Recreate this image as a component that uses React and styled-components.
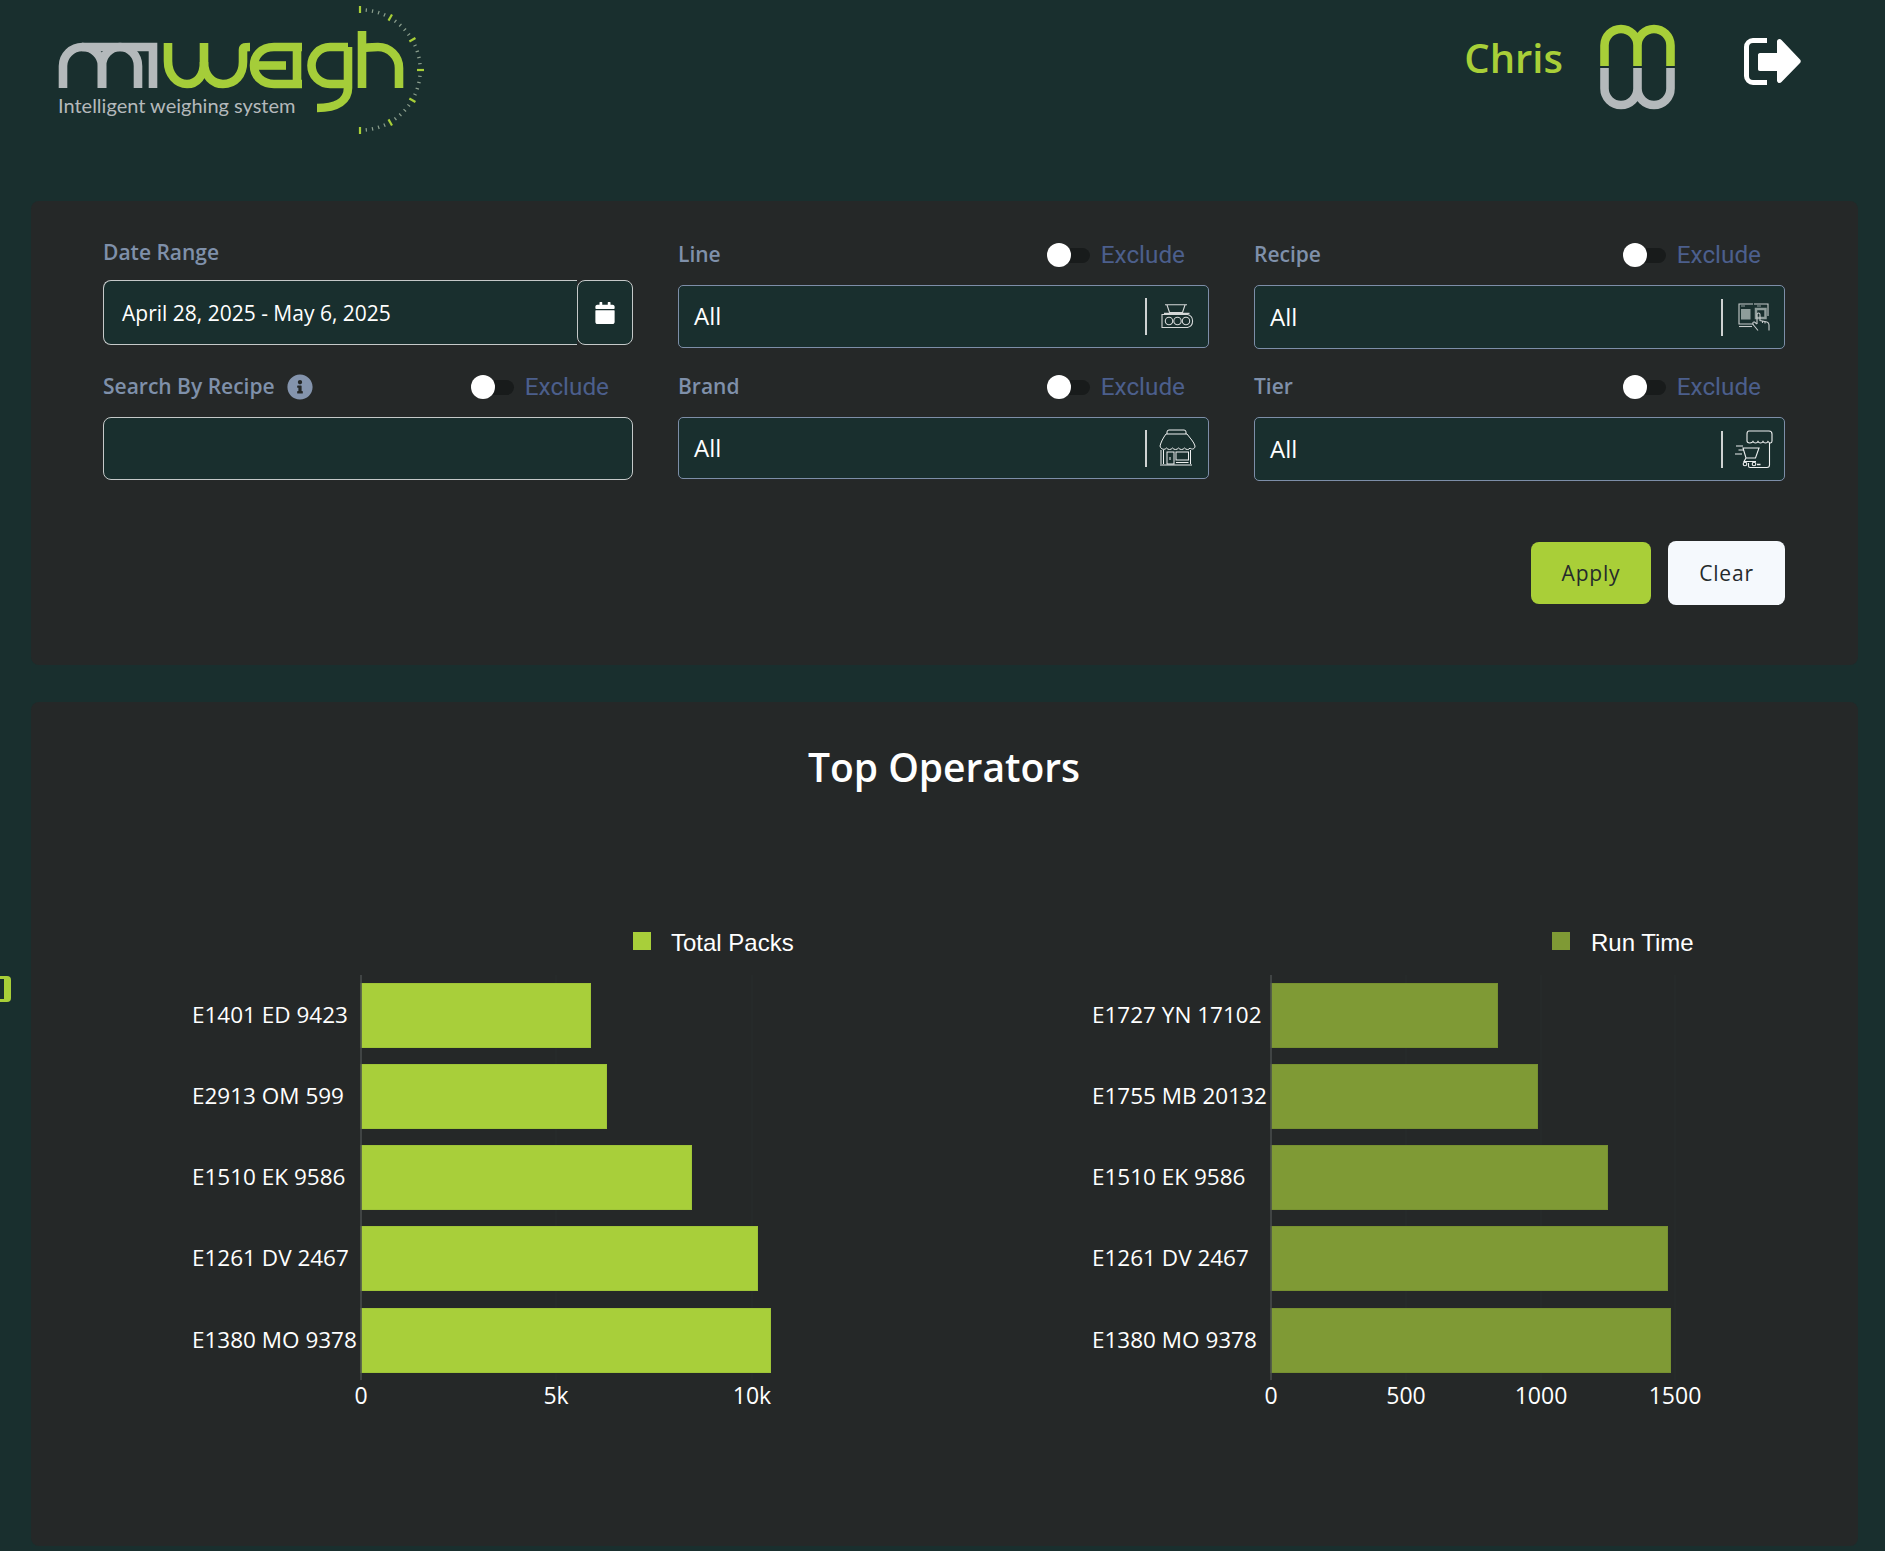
import React from 'react';
import styled, { createGlobalStyle } from 'styled-components';
import { FaCalendar, FaInfoCircle } from 'react-icons/fa';

const GlobalStyle = createGlobalStyle`
  html, body {
    margin: 0;
    padding: 0;
    background: #192f2e;
  }
  body {
    font-family: 'Open Sans', 'Liberation Sans', sans-serif;
  }
`;

const Page = styled.div`
  position: relative;
  min-height: 1551px;
  background: #192f2e;
`;

const Header = styled.header`
  display: flex;
  justify-content: space-between;
  align-items: flex-start;
  height: 201px;
  padding: 4px 79px 0 56px;
  box-sizing: border-box;
`;

const UserArea = styled.div`
  display: flex;
  align-items: flex-start;
  padding-top: 17px;
`;

const UserName = styled.div`
  font-size: 40px;
  font-weight: 600;
  line-height: 74px;
  color: #a8cf38;
  margin-right: 33px;
`;

const Monogram = styled.svg`
  display: block;
  width: 84px;
  height: 92px;
  margin-right: 60px;
`;

const LogoutIcon = styled.svg`
  display: block;
  width: 66px;
  height: 54px;
  margin-top: 13px;
`;

const LogoSvg = styled.svg`
  display: block;
  width: 370px;
  height: 130px;
`;

const Tagline = styled.text`
  font-family: Lato, 'Open Sans', sans-serif;
  font-size: 20px;
  fill: #b4b9bb;
`;

const Main = styled.main`
  display: flex;
  flex-direction: column;
  gap: 37px;
  padding: 0 27px 0 31px;
`;

const Card = styled.section`
  background: #252828;
  border-radius: 8px;
`;

const FilterCard = styled(Card)`
  padding: 36px 73px 60px 72px;
`;

const FilterGrid = styled.div`
  display: grid;
  grid-template-columns: 530px 531px 531px;
  column-gap: 45px;
  row-gap: 20px;
  align-items: start;
`;

const Field = styled.div`
  display: flex;
  flex-direction: column;
  height: 112px;
  padding-top: ${(p) => (p.$date ? '0' : '6px')};
  box-sizing: border-box;
`;

const LabelRow = styled.div`
  display: flex;
  align-items: center;
  justify-content: space-between;
  height: ${(p) => (p.$date ? '32px' : '24px')};
  margin-bottom: ${(p) => (p.$date ? '11px' : '18px')};
  padding-right: 24px;
`;

const LabelGroup = styled.div`
  display: flex;
  align-items: center;
  gap: 12px;
`;

const Label = styled.label`
  padding-bottom: 2px;
  font-size: 21px;
  font-weight: 600;
  color: #7f90aa;
  white-space: nowrap;
`;

const InfoIcon = styled(FaInfoCircle)`
  width: 26px;
  height: 26px;
  color: #8494ad;
`;

const ExcludeWrap = styled.div`
  display: flex;
  align-items: center;
  gap: 11px;
`;

const ToggleTrack = styled.div`
  position: relative;
  width: 43px;
  height: 15px;
  border-radius: 8px;
  background: #181b1b;
`;

const ToggleThumb = styled.div`
  position: absolute;
  left: 0;
  top: -4.500px;
  width: 24px;
  height: 24px;
  border-radius: 50%;
  background: #ffffff;
`;

const ExcludeText = styled.span`
  font-family: Roboto, sans-serif;
  font-size: 24.300px;
  line-height: 28px;
  color: #4c5f8c;
`;

const DateGroup = styled.div`
  display: flex;
  height: 65px;
`;

const DateInput = styled.div`
  flex: 1;
  display: flex;
  align-items: center;
  padding-left: 18px;
  font-size: 21px;
  color: #ffffff;
  background: #192f2e;
  border: 1.500px solid #c5c9c9;
  border-right: none;
  border-radius: 8px 0 0 8px;
`;

const CalendarButton = styled.div`
  display: flex;
  align-items: center;
  justify-content: center;
  width: 56px;
  box-sizing: border-box;
  color: #ffffff;
  background: #192f2e;
  border: 1.500px solid #c5c9c9;
  border-radius: 8px;
  font-size: 22px;
`;

const SearchInput = styled.div`
  height: 63px;
  box-sizing: border-box;
  background: #192f2e;
  border: 1.500px solid #c5c9c9;
  border-radius: 8px;
`;

const Select = styled.div`
  display: flex;
  align-items: center;
  height: ${(p) => p.$height}px;
  box-sizing: border-box;
  background: #192f2e;
  border: 1.500px solid #7d8ea8;
  border-radius: 5px;
`;

const SelectValue = styled.span`
  flex: 1;
  padding: 0 0 2px 15px;
  font-size: 24px;
  color: #ffffff;
`;

const Divider = styled.span`
  width: 2px;
  height: 37px;
  background: #cfd2d2;
`;

const IconSlot = styled.span`
  display: flex;
  align-items: center;
  justify-content: center;
  width: 61px;
`;

const Actions = styled.div`
  display: flex;
  justify-content: flex-end;
  align-items: center;
  gap: 17px;
  margin-top: 60px;
`;

const Button = styled.button`
  width: ${(p) => (p.$primary ? '120px' : '117px')};
  height: ${(p) => (p.$primary ? '62px' : '64px')};
  border: none;
  border-radius: 8px;
  font-family: 'Open Sans', sans-serif;
  font-size: 21px;
  font-weight: 500;
  letter-spacing: 0.800px;
  color: #252a2c;
  background: ${(p) => (p.$primary ? '#a9cf38' : '#f5f9fd')};
`;

const ChartCard = styled(Card)`
  padding: 38px 73px 103px 72px;
`;

const Title = styled.h2`
  margin: 0 0 126px;
  font-size: 39px;
  font-weight: 600;
  line-height: 54px;
  text-align: center;
  color: #ffffff;
`;

const ChartRow = styled.div`
  display: grid;
  grid-template-columns: 841px 841px;
`;

const ChartSvg = styled.svg`
  display: block;
  width: 100%;
  height: 523px;
`;

const LegendText = styled.text`
  font-family: 'Liberation Sans', Arial, sans-serif;
  font-size: 24px;
  fill: #ffffff;
`;

const AxisLabel = styled.text`
  font-family: 'Open Sans', sans-serif;
  font-size: ${(p) => (p.$tick ? '23px' : '22.500px')};
  fill: #ffffff;
`;

const SideTab = styled.div`
  position: absolute;
  left: 0;
  top: 976px;
  width: 11px;
  height: 26px;
  box-sizing: border-box;
  border: solid #a8cf38;
  border-width: 3px 7px 3px 0;
  border-radius: 0 4px 4px 0;
`;

const packs = {
  color: '#a8cf3a',
  edge: '#9fc538',
  legend: 'Total Packs',
  legendX: 530,
  legendTextX: 568,
  labelX: 89,
  axisX: 258,
  rows: [
    ['E1401 ED 9423', 230],
    ['E2913 OM 599', 246],
    ['E1510 EK 9586', 331],
    ['E1261 DV 2467', 397],
    ['E1380 MO 9378', 410],
  ],
  ticks: [
    ['0', 258],
    ['5k', 453],
    ['10k', 649],
  ],
};

const runTime = {
  color: '#7f9a35',
  edge: '#779131',
  legend: 'Run Time',
  legendX: 608,
  legendTextX: 647,
  labelX: 148,
  axisX: 327,
  rows: [
    ['E1727 YN 17102', 227],
    ['E1755 MB 20132', 267],
    ['E1510 EK 9586', 337],
    ['E1261 DV 2467', 397],
    ['E1380 MO 9378', 400],
  ],
  ticks: [
    ['0', 327],
    ['500', 462],
    ['1000', 597],
    ['1500', 731],
  ],
};

const BAR_TOPS = [63, 144, 225, 306, 388];

function BarChart({ data }) {
  return (
    <ChartSvg>
      <rect x={data.legendX} y={12} width={18} height={18} fill={data.color} />
      <LegendText x={data.legendTextX} y={31}>
        {data.legend}
      </LegendText>
      {data.ticks.slice(1).map(([t, x]) => (
        <line key={t} x1={x} x2={x} y1={55} y2={460} stroke='#292d2d' strokeWidth='1' />
      ))}
      {data.rows.map(([name, w], i) => (
        <g key={name}>
          <rect
            x={data.axisX}
            y={BAR_TOPS[i] + 0.5}
            width={w - 0.5}
            height={64}
            fill={data.color}
            stroke={data.edge}
            strokeWidth='1'
          />
          <AxisLabel x={data.labelX} y={BAR_TOPS[i] + 40}>
            {name}
          </AxisLabel>
        </g>
      ))}
      <line x1={data.axisX} x2={data.axisX} y1={55} y2={460} stroke='#4a4e4e' strokeWidth='1.5' />
      {data.ticks.map(([t, x]) => (
        <AxisLabel key={t} $tick x={x} y={484} textAnchor='middle'>
          {t}
        </AxisLabel>
      ))}
    </ChartSvg>
  );
}

function DialTicks() {
  const out = [];
  for (let a = -90; a <= 90; a += 6) {
    const major = a % 30 === 0;
    const rad = (a * Math.PI) / 180;
    const r1 = major ? 57 : 58.5;
    const r2 = major ? 64 : 62;
    out.push(
      <line
        key={a}
        x1={360 + r1 * Math.cos(rad)}
        y1={70 + r1 * Math.sin(rad)}
        x2={360 + r2 * Math.cos(rad)}
        y2={70 + r2 * Math.sin(rad)}
        stroke={major ? '#a8cf38' : '#8c9f8e'}
        strokeWidth={major ? 2.2 : 1.2}
      />
    );
  }
  return out;
}

function Logo() {
  return (
    <LogoSvg viewBox='56 4 370 130' role='img' aria-label='miweigh'>
      <g fill='none' stroke='#b4b9bb' strokeWidth='8.600'>
        <path d='M63 88V66A19.500 19 0 0 1 82.500 47A19.500 19 0 0 1 102 66V88' />
        <path d='M102 88V66A18 19 0 0 1 120 47A18 19 0 0 1 138 66V88' />
        <path d='M82 47H120' />
        <path d='M153 88V47H120' />
      </g>
      <g fill='none' stroke='#a5cd39' strokeWidth='8.600'>
        <path d='M168 43V61C168 75 177 84 187 84C197 84 204 76 204 62V43' />
        <path d='M204 62C204 76 213 84 223 84C235 84 243 75 243 62V50C243 47 245 47 250 47' />
        <path d='M302 47H274C261 47 254 56 254 65.500C254 76 262 84 274 84H302' />
        <path d='M256 65.500H286' />
        <path d='M297 47V88' />
        <path d='M348 47H330A18.500 18.500 0 0 0 330 84H348' />
        <path d='M348 47V88C348 100 338 108 317 108' />
        <path d='M362 31V88' />
        <path d='M362 49C366 47 372 47 378 47A21 21 0 0 1 399 68V88' />
      </g>
      <DialTicks />
      <Tagline x='58' y='113'>
        Intelligent weighing system
      </Tagline>
    </LogoSvg>
  );
}

function ConveyorIcon() {
  return (
    <svg width='34' height='26' viewBox='0 0 34 26' fill='none' stroke='#d5d8d8' strokeWidth='1.100'>
      <path d='M4 .8H26M6 1L8.500 8.500H21.500L24 1' />
      <path d='M3 9.500H28.500' strokeWidth='1.500' />
      <path d='M1 10.500H26.500A6.700 6.700 0 0 1 26.500 23.500H1Z' />
      <circle cx='8' cy='17' r='3.700' />
      <circle cx='16.500' cy='17' r='3.700' />
      <circle cx='25' cy='17' r='3.700' />
    </svg>
  );
}

function ShopIcon() {
  return (
    <svg width='37' height='38' viewBox='0 0 37 38' fill='none' stroke='#eef0f0' strokeWidth='1'>
      <path d='M8 5V3A2 2 0 0 1 10 1H25A2 2 0 0 1 27 3V5' />
      <path d='M7 5H28C31 9 35 13 36 17C36 20 33 21 31 19C30 21 27 21 25.500 19C24 21 21 21 19.500 19C18 21 15 21 13.500 19C12 21 9 21 7.500 19C6 21 2 21 1 17C2 13 4 9 7 5Z' />
      <path d='M2 21V35M4.500 21V35M31.500 21V35M1 36H33' />
      <rect x='8' y='23' width='7' height='12' />
      <path d='M11 28V31' />
      <rect x='17' y='23' width='12.500' height='8' />
      <path d='M17 33.500H29.500' />
    </svg>
  );
}

function RecipeIcon() {
  return (
    <svg width='32' height='30' viewBox='0 0 32 30' fill='none' stroke='#c8cccc' strokeWidth='1.100'>
      <path d='M15 2H1V22H15' />
      <path d='M16 2H30V14' />
      <path d='M1 24.500H14' />
      <rect x='3' y='7' width='9.500' height='10.500' fill='#8f9d9b' stroke='none' />
      <rect x='18' y='7' width='9.500' height='9' fill='none' stroke='#8f9d9b' strokeWidth='2.500' />
      <path d='M3 4H7M19 4H23' stroke='#8f9d9b' />
      <path d='M19 22V12.500A1.500 1.500 0 0 1 22 12.500V18.500L29 20C30.500 20.500 31 21.500 31 23V28.500' />
      <path d='M19 22L16.500 20C14.500 19.500 14.500 22 15.500 23L20 28.500' />
      <path d='M24.500 19V21M27 19.500V21.500' />
    </svg>
  );
}

function TierIcon() {
  return (
    <svg width='38' height='39' viewBox='0 0 38 39' fill='none' stroke='#eef0f0' strokeWidth='1.100'>
      <path d='M14 1H34C36 1 37 2 37 4V11C37 13.500 34.500 13.500 33 11.500C32 13.500 29 13.500 28 11.500C27 13.500 24 13.500 23 11.500C22 13.500 19 13.500 18 11.500C17 13.500 12 13.500 12 11V4C12 2 13 1 14 1Z' />
      <path d='M34.500 13V35C34.500 36.500 33.500 37.500 32 37.500H15C14 37.500 13.500 37 13.500 36V33' />
      <path d='M22 34.500H25.500' strokeWidth='1.500' />
      <path d='M1 16H8M3.500 20H9M0 24H7' />
      <path d='M8 18H24L20.500 28H11L8 18ZM11 28L9 31.500H21' />
      <circle cx='10' cy='34' r='1.800' />
      <circle cx='19' cy='34' r='1.800' />
    </svg>
  );
}

function Exclude() {
  return (
    <ExcludeWrap>
      <ToggleTrack>
        <ToggleThumb />
      </ToggleTrack>
      <ExcludeText>Exclude</ExcludeText>
    </ExcludeWrap>
  );
}

function SelectField({ label, height, children }) {
  return (
    <Field>
      <LabelRow>
        <Label>{label}</Label>
        <Exclude />
      </LabelRow>
      <Select $height={height}>
        <SelectValue>All</SelectValue>
        <Divider />
        <IconSlot>{children}</IconSlot>
      </Select>
    </Field>
  );
}

export default function App() {
  return (
    <Page>
      <GlobalStyle />
      <Header>
        <Logo />
        <UserArea>
          <UserName>Chris</UserName>
          <Monogram viewBox='1596 21 84 92' fill='none' strokeWidth='8.600'>
            <path
              stroke='#a8cf38'
              d='M1604.500 66V45.500A16.500 16.500 0 0 1 1637.500 45.500V66M1637.500 45.500A16.500 16.500 0 0 1 1670.500 45.500V66'
            />
            <path
              stroke='#b4b9bb'
              d='M1604.500 68V88.500A16.500 16.500 0 0 0 1637.500 88.500V68M1637.500 88.500A16.500 16.500 0 0 0 1670.500 88.500V68'
            />
          </Monogram>
          <LogoutIcon viewBox='1740 34 66 54'>
            <path
              d='M1767 40.500H1753A6.500 6.500 0 0 0 1746.500 47V76A6.500 6.500 0 0 0 1753 82.500H1767'
              fill='none'
              stroke='#ffffff'
              strokeWidth='5'
            />
            <path
              d='M1760 53H1777V41.500C1777 39 1780 38 1781.500 40L1800 59.500C1801 60.500 1801 62 1800 63L1781.500 82C1780 84 1777 83 1777 80.500V71H1760C1758.500 71 1758 70 1758 69V55C1758 54 1758.500 53 1760 53Z'
              fill='#ffffff'
            />
          </LogoutIcon>
        </UserArea>
      </Header>
      <Main>
        <FilterCard>
          <FilterGrid>
            <Field $date>
              <LabelRow $date>
                <Label>Date Range</Label>
              </LabelRow>
              <DateGroup>
                <DateInput>April 28, 2025 - May 6, 2025</DateInput>
                <CalendarButton>
                  <FaCalendar />
                </CalendarButton>
              </DateGroup>
            </Field>
            <SelectField label='Line' height={63}>
              <ConveyorIcon />
            </SelectField>
            <SelectField label='Recipe' height={64}>
              <RecipeIcon />
            </SelectField>
            <Field>
              <LabelRow>
                <LabelGroup>
                  <Label>Search By Recipe</Label>
                  <InfoIcon />
                </LabelGroup>
                <Exclude />
              </LabelRow>
              <SearchInput />
            </Field>
            <SelectField label='Brand' height={62}>
              <ShopIcon />
            </SelectField>
            <SelectField label='Tier' height={64}>
              <TierIcon />
            </SelectField>
          </FilterGrid>
          <Actions>
            <Button $primary>Apply</Button>
            <Button>Clear</Button>
          </Actions>
        </FilterCard>
        <ChartCard>
          <Title>Top Operators</Title>
          <ChartRow>
            <BarChart data={packs} />
            <BarChart data={runTime} />
          </ChartRow>
        </ChartCard>
      </Main>
      <SideTab />
    </Page>
  );
}
